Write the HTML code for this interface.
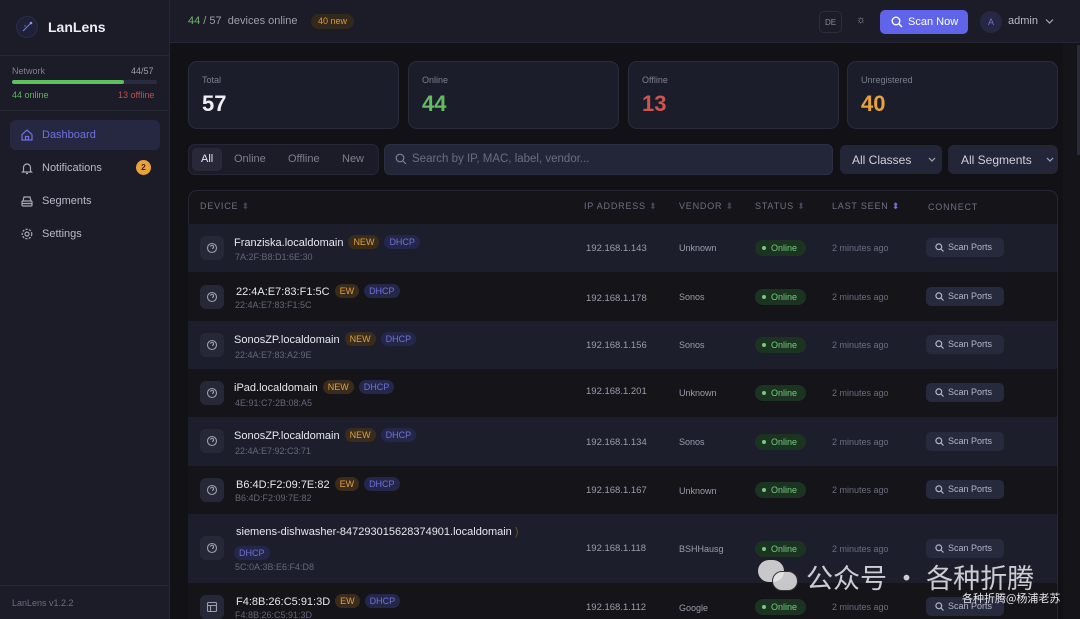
<!DOCTYPE html>
<html><head><meta charset="utf-8">
<style>
*{box-sizing:border-box;margin:0;padding:0}
html{width:1080px;height:619px;overflow:hidden}
body{width:1080px;height:619px;overflow:hidden;background:#111116;font-family:"Liberation Sans","Noto Sans CJK SC",sans-serif;color:#d8d9e4;position:relative}
.a{position:absolute}
.sb{left:0;top:0;width:170px;height:619px;background:#1b1c28;border-right:1px solid #262735}
.hd{left:170px;top:0;width:910px;height:43px;background:#1b1c28;border-bottom:1px solid #262735}
.card{background:#1c1d2a;border:1px solid #2a2b3a;border-radius:9px;height:68px;top:61px;width:211px}
.card .l{position:absolute;left:13px;top:13px;font-size:9px;color:#7e7f90}
.card .v{position:absolute;left:13px;top:29px;font-size:22px;font-weight:bold}
.nav{left:10px;width:150px;height:30px;border-radius:6px;font-size:11px;color:#b8b9c8}
.nav span{position:absolute;left:32px;top:9px}
.nav svg{position:absolute;left:10px;top:8px}
.row{left:188px;width:869px}
.lt{background:#1d1e2c}
.dk{background:#141419}
.ic{left:12px;width:24px;height:24px;border-radius:6px;background:#262838}
.nm{left:46px;font-size:11px;color:#e6e7ef}
.mac{left:47px;font-size:9px;color:#666778}
.b{display:inline-block;font-size:9px;padding:2px 5px;border-radius:8px;margin-left:5px;vertical-align:1px}
.bn{background:#3a2c1c;color:#e0a040}
.bd{background:#25274a;color:#6d72d8}
.ip{left:398px;font-size:9.5px;color:#9c9dac}
.vd{left:491px;font-size:9px;color:#9c9dac}
.st{left:567px;width:51px;height:16px;border-radius:8px;background:#1d3322;color:#6fcf7b;font-size:9px;line-height:16px;padding-left:16px}
.st:before{content:"";position:absolute;left:7px;top:6px;width:4px;height:4px;border-radius:2px;background:#6fcf7b}
.ls{left:644px;font-size:9px;color:#6c6d80}
.sp{left:738px;width:78px;height:19px;border-radius:5px;background:#272a3d;color:#b4b6c8;font-size:9px;line-height:19px;padding-left:22px}
.sp svg{position:absolute;left:9px;top:5px}
.th{font-size:9px;color:#6f7083;letter-spacing:.8px;top:201px}
</style></head><body>
<div class="a sb">
 <div class="a" style="left:16px;top:16px;width:22px;height:22px;border-radius:11px;background:#1f2136;border:1px solid #2b2d45"></div>
 <svg class="a" style="left:16px;top:16px" width="22" height="22"><line x1="7" y1="15" x2="15" y2="7" stroke="#6f74e0" stroke-width="1.2"/><circle cx="15" cy="7" r="1.3" fill="#8e92f0"/><circle cx="9" cy="10" r=".7" fill="#6f74e0"/></svg>
 <div class="a" style="left:48px;top:19px;font-size:14px;font-weight:bold;color:#eceef5">LanLens</div>
 <div class="a" style="left:0;top:55px;width:170px;height:1px;background:#262735"></div>
 <div class="a" style="left:12px;top:66px;font-size:9px;color:#7e7f90">Network</div>
 <div class="a" style="left:131px;top:66px;font-size:9px;color:#9c9dac">44/57</div>
 <div class="a" style="left:12px;top:80px;width:145px;height:4px;border-radius:2px;background:#2a2c40"></div>
 <div class="a" style="left:12px;top:80px;width:112px;height:4px;border-radius:2px;background:#5fc060"></div>
 <div class="a" style="left:12px;top:90px;font-size:9px;color:#5fb560">44 online</div>
 <div class="a" style="left:118px;top:90px;font-size:9px;color:#c0504a">13 offline</div>
 <div class="a" style="left:0;top:110px;width:170px;height:1px;background:#262735"></div>
 <div class="a nav" style="top:120px;background:#262842;color:#6d72e0"><svg width="14" height="14" viewBox="0 0 14 14" fill="none" stroke="#6d72e0" stroke-width="1.2"><path d="M2 6.5L7 2l5 4.5V12H2z"/><path d="M5.5 12V8.5h3V12"/></svg><span>Dashboard</span></div>
 <div class="a nav" style="top:153px"><svg width="14" height="14" viewBox="0 0 14 14" fill="none" stroke="#a8a9b8" stroke-width="1.2"><path d="M3.5 10V6.5a3.5 3.5 0 017 0V10l1 1H2.5z"/><path d="M6 12.5h2"/></svg><span>Notifications</span>
  <div class="a" style="left:126px;top:7px;width:15px;height:15px;border-radius:8px;background:#e9a23b;color:#3a2410;font-size:8px;font-weight:bold;text-align:center;line-height:15px">2</div></div>
 <div class="a nav" style="top:186px"><svg width="14" height="14" viewBox="0 0 14 14" fill="none" stroke="#a8a9b8" stroke-width="1.2"><rect x="2" y="7" width="10" height="5" rx="1"/><path d="M3 7l1-4h6l1 4M2 9.5h10"/></svg><span>Segments</span></div>
 <div class="a nav" style="top:219px"><svg width="14" height="14" viewBox="0 0 14 14" fill="none" stroke="#a8a9b8" stroke-width="1.2"><circle cx="7" cy="7" r="2"/><circle cx="7" cy="7" r="4.8" stroke-dasharray="2.2 1.3"/></svg><span>Settings</span></div>
 <div class="a" style="left:0;top:585px;width:170px;height:1px;background:#262735"></div>
 <div class="a" style="left:12px;top:598px;font-size:9px;color:#6c6d80">LanLens v1.2.2</div>
</div>
<div class="a hd">
 <div class="a" style="left:18px;top:15px;font-size:11px;color:#9c9dac"><span style="color:#6fb76a">44</span> / 57 &nbsp;devices online</div>
 <div class="a" style="left:141px;top:14px;height:15px;padding:0 7px;border-radius:8px;background:#33281c;color:#d9993e;font-size:9px;line-height:15px">40 new</div>
 <div class="a" style="left:649px;top:11px;width:23px;height:22px;border:1px solid #2c2d3c;border-radius:5px;font-size:8px;color:#8a8b9c;text-align:center;line-height:21px">DE</div>
 <div class="a" style="left:686px;top:14px;font-size:11px;color:#9c9dac">☼</div>
 <div class="a" style="left:710px;top:10px;width:88px;height:24px;border-radius:5px;background:#5f64ea;color:#fff;font-size:11px;line-height:24px;padding-left:28px"><svg class="a" style="left:11px;top:6px" width="12" height="12" fill="none" stroke="#fff" stroke-width="1.4"><circle cx="5" cy="5" r="3.8"/><path d="M8 8l3 3"/></svg>Scan Now</div>
 <div class="a" style="left:810px;top:11px;width:22px;height:22px;border-radius:11px;background:#262842;color:#6d72e0;font-size:9px;text-align:center;line-height:22px">A</div>
 <div class="a" style="left:838px;top:15px;font-size:11px;color:#b8b9c8">admin</div>
 <svg class="a" style="left:875px;top:18px" width="9" height="7" fill="none" stroke="#a8a9b8" stroke-width="1.2"><path d="M1 1.5l3.5 3.5 3.5-3.5"/></svg>
</div>
<div class="a" style="left:1063px;top:43px;width:17px;height:576px;background:#141419"></div>
<div class="a" style="left:1077px;top:45px;width:3px;height:110px;background:#2a2b36"></div>
<div class="a card" style="left:188px"><div class="l">Total</div><div class="v" style="color:#eeeff5">57</div></div>
<div class="a card" style="left:408px"><div class="l">Online</div><div class="v" style="color:#65bb62">44</div></div>
<div class="a card" style="left:628px"><div class="l">Offline</div><div class="v" style="color:#d0534c">13</div></div>
<div class="a card" style="left:847px"><div class="l">Unregistered</div><div class="v" style="color:#e5a23a">40</div></div>
<div class="a" style="left:188px;top:144px;width:191px;height:31px;border-radius:7px;background:#1b1c28;border:1px solid #262735"></div>
<div class="a" style="left:192px;top:148px;width:30px;height:23px;border-radius:5px;background:#272939"></div>
<div class="a" style="left:201px;top:153px;font-size:11px;color:#e6e7ef">All</div>
<div class="a" style="left:234px;top:153px;font-size:11px;color:#7e7f90">Online</div>
<div class="a" style="left:288px;top:153px;font-size:11px;color:#7e7f90">Offline</div>
<div class="a" style="left:342px;top:153px;font-size:11px;color:#7e7f90">New</div>
<div class="a" style="left:384px;top:144px;width:449px;height:31px;border-radius:6px;background:#232538;border:1px solid #2c2e42"></div>
<svg class="a" style="left:395px;top:153px" width="12" height="12" fill="none" stroke="#7e7f90" stroke-width="1.2"><circle cx="5" cy="5" r="3.8"/><path d="M8 8l3 3"/></svg>
<div class="a" style="left:412px;top:153px;font-size:11.5px;color:#6c6d80">Search by IP, MAC, label, vendor...</div>
<div class="a" style="left:840px;top:145px;width:102px;height:29px;border-radius:6px;background:#232538"></div>
<div class="a" style="left:852px;top:153px;font-size:12px;color:#cfd0dc">All Classes</div>
<svg class="a" style="left:928px;top:157px" width="8" height="6" fill="none" stroke="#a8a9b8" stroke-width="1.2"><path d="M1 1l3 3 3-3"/></svg>
<div class="a" style="left:948px;top:145px;width:110px;height:29px;border-radius:6px;background:#232538"></div>
<div class="a" style="left:961px;top:153px;font-size:12px;color:#cfd0dc">All Segments</div>
<svg class="a" style="left:1046px;top:157px" width="8" height="6" fill="none" stroke="#a8a9b8" stroke-width="1.2"><path d="M1 1l3 3 3-3"/></svg>
<div class="a" style="left:188px;top:190px;width:870px;height:429px;border-radius:9px 9px 0 0;border:1px solid #262735;border-bottom:none;background:#141419;overflow:hidden"></div>
<div class="a th" style="left:200px">DEVICE <span style="color:#44455a">⬍</span></div>
<div class="a th" style="left:584px">IP ADDRESS <span style="color:#44455a">⬍</span></div>
<div class="a th" style="left:679px">VENDOR <span style="color:#44455a">⬍</span></div>
<div class="a th" style="left:755px">STATUS <span style="color:#44455a">⬍</span></div>
<div class="a th" style="left:832px">LAST SEEN <span style="color:#6d72e0">⬍</span></div>
<div class="a th" style="left:928px;top:202px">CONNECT</div>

<div class="a row lt" style="top:224px;height:48px"><div class="a ic" style="top:12px"></div><div class="a nm" style="top:11px">Franziska.localdomain<span class="b bn">NEW</span><span class="b bd">DHCP</span></div><div class="a mac" style="top:28px">7A:2F:B8:D1:6E:30</div><div class="a ip" style="top:19px">192.168.1.143</div><div class="a vd" style="top:19px">Unknown</div><div class="a st" style="top:16px">Online</div><div class="a ls" style="top:19px">2 minutes ago</div><div class="a sp" style="top:14px">Scan Ports</div></div>
<div class="a row dk" style="top:272px;height:49px"><div class="a ic" style="top:13px"></div><div class="a nm" style="top:12px;left:48px">22:4A:E7:83:F1:5C<span class="b bn">EW</span><span class="b bd">DHCP</span></div><div class="a mac" style="top:28px">22:4A:E7:83:F1:5C</div><div class="a ip" style="top:21px">192.168.1.178</div><div class="a vd" style="top:20px">Sonos</div><div class="a st" style="top:17px">Online</div><div class="a ls" style="top:20px">2 minutes ago</div><div class="a sp" style="top:15px">Scan Ports</div></div>
<div class="a row lt" style="top:321px;height:48px"><div class="a ic" style="top:12px"></div><div class="a nm" style="top:11px">SonosZP.localdomain<span class="b bn">NEW</span><span class="b bd">DHCP</span></div><div class="a mac" style="top:29px">22:4A:E7:83:A2:9E</div><div class="a ip" style="top:19px">192.168.1.156</div><div class="a vd" style="top:19px">Sonos</div><div class="a st" style="top:16px">Online</div><div class="a ls" style="top:19px">2 minutes ago</div><div class="a sp" style="top:14px">Scan Ports</div></div>
<div class="a row dk" style="top:369px;height:48px"><div class="a ic" style="top:12px"></div><div class="a nm" style="top:11px">iPad.localdomain<span class="b bn">NEW</span><span class="b bd">DHCP</span></div><div class="a mac" style="top:29px">4E:91:C7:2B:08:A5</div><div class="a ip" style="top:17px">192.168.1.201</div><div class="a vd" style="top:19px">Unknown</div><div class="a st" style="top:16px">Online</div><div class="a ls" style="top:19px">2 minutes ago</div><div class="a sp" style="top:14px">Scan Ports</div></div>
<div class="a row lt" style="top:417px;height:49px"><div class="a ic" style="top:12px"></div><div class="a nm" style="top:11px">SonosZP.localdomain<span class="b bn">NEW</span><span class="b bd">DHCP</span></div><div class="a mac" style="top:29px">22:4A:E7:92:C3:71</div><div class="a ip" style="top:20px">192.168.1.134</div><div class="a vd" style="top:20px">Sonos</div><div class="a st" style="top:17px">Online</div><div class="a ls" style="top:20px">2 minutes ago</div><div class="a sp" style="top:15px">Scan Ports</div></div>
<div class="a row dk" style="top:466px;height:48px"><div class="a ic" style="top:12px"></div><div class="a nm" style="top:11px;left:48px">B6:4D:F2:09:7E:82<span class="b bn">EW</span><span class="b bd">DHCP</span></div><div class="a mac" style="top:27px">B6:4D:F2:09:7E:82</div><div class="a ip" style="top:19px">192.168.1.167</div><div class="a vd" style="top:20px">Unknown</div><div class="a st" style="top:16px">Online</div><div class="a ls" style="top:19px">2 minutes ago</div><div class="a sp" style="top:14px">Scan Ports</div></div>
<div class="a row lt" style="top:514px;height:69px"><div class="a ic" style="top:22px"></div><div class="a nm" style="top:12px;left:48px">siemens-dishwasher-847293015628374901.localdomain <span style="color:#6a5030">)</span></div><div class="a" style="left:46px;top:30px"><span class="b bd" style="margin:0">DHCP</span></div><div class="a mac" style="top:48px">5C:0A:3B:E6:F4:D8</div><div class="a ip" style="top:29px">192.168.1.118</div><div class="a vd" style="top:30px">BSHHausg</div><div class="a st" style="top:27px">Online</div><div class="a ls" style="top:30px">2 minutes ago</div><div class="a sp" style="top:25px">Scan Ports</div></div>
<div class="a row dk" style="top:583px;height:36px"><div class="a ic" style="top:12px"></div><div class="a nm" style="top:11px;left:48px">F4:8B:26:C5:91:3D<span class="b bn">EW</span><span class="b bd">DHCP</span></div><div class="a mac" style="top:27px">F4:8B:26:C5:91:3D</div><div class="a ip" style="top:19px">192.168.1.112</div><div class="a vd" style="top:20px">Google</div><div class="a st" style="top:16px">Online</div><div class="a ls" style="top:19px">2 minutes ago</div><div class="a sp" style="top:14px">Scan Ports</div></div>
<div class="a" style="left:758px;top:560px;width:26px;height:22px;border-radius:13px;background:rgba(230,230,230,.85)"></div>
<div class="a" style="left:772px;top:571px;width:26px;height:20px;border-radius:12px;background:rgba(230,230,230,.85);border:1px solid #333"></div>
<div class="a" style="left:806px;top:557px;font-size:27px;color:rgba(235,235,240,.85);font-family:'Noto Sans CJK SC',sans-serif">公众号 · 各种折腾</div>
<div class="a" style="left:962px;top:590px;font-size:11px;color:#e8e8ee;font-family:'Noto Sans CJK SC',sans-serif">各种折腾@杨浦老苏</div>
<script>
document.querySelectorAll('.ic').forEach(function(e,i){e.innerHTML='<svg style="position:absolute;left:6px;top:6px" width="12" height="12" fill="none" stroke="#9c9dac" stroke-width="1.1">'+(i==7?'<rect x="1.5" y="1.5" width="9" height="9" rx="1"/><path d="M1.5 4.5h9M4.5 4.5v6"/>':'<circle cx="6" cy="6" r="4.5"/><path d="M4.6 4.8a1.5 1.5 0 112 1.4v.8M6 8.6v.2"/>')+'</svg>'});
document.querySelectorAll('.sp').forEach(function(e){e.insertAdjacentHTML('afterbegin','<svg width="9" height="9" fill="none" stroke="#b4b6c8" stroke-width="1.2"><circle cx="3.8" cy="3.8" r="2.9"/><path d="M6 6l2.5 2.5"/></svg>')});
</script>
</body></html>
